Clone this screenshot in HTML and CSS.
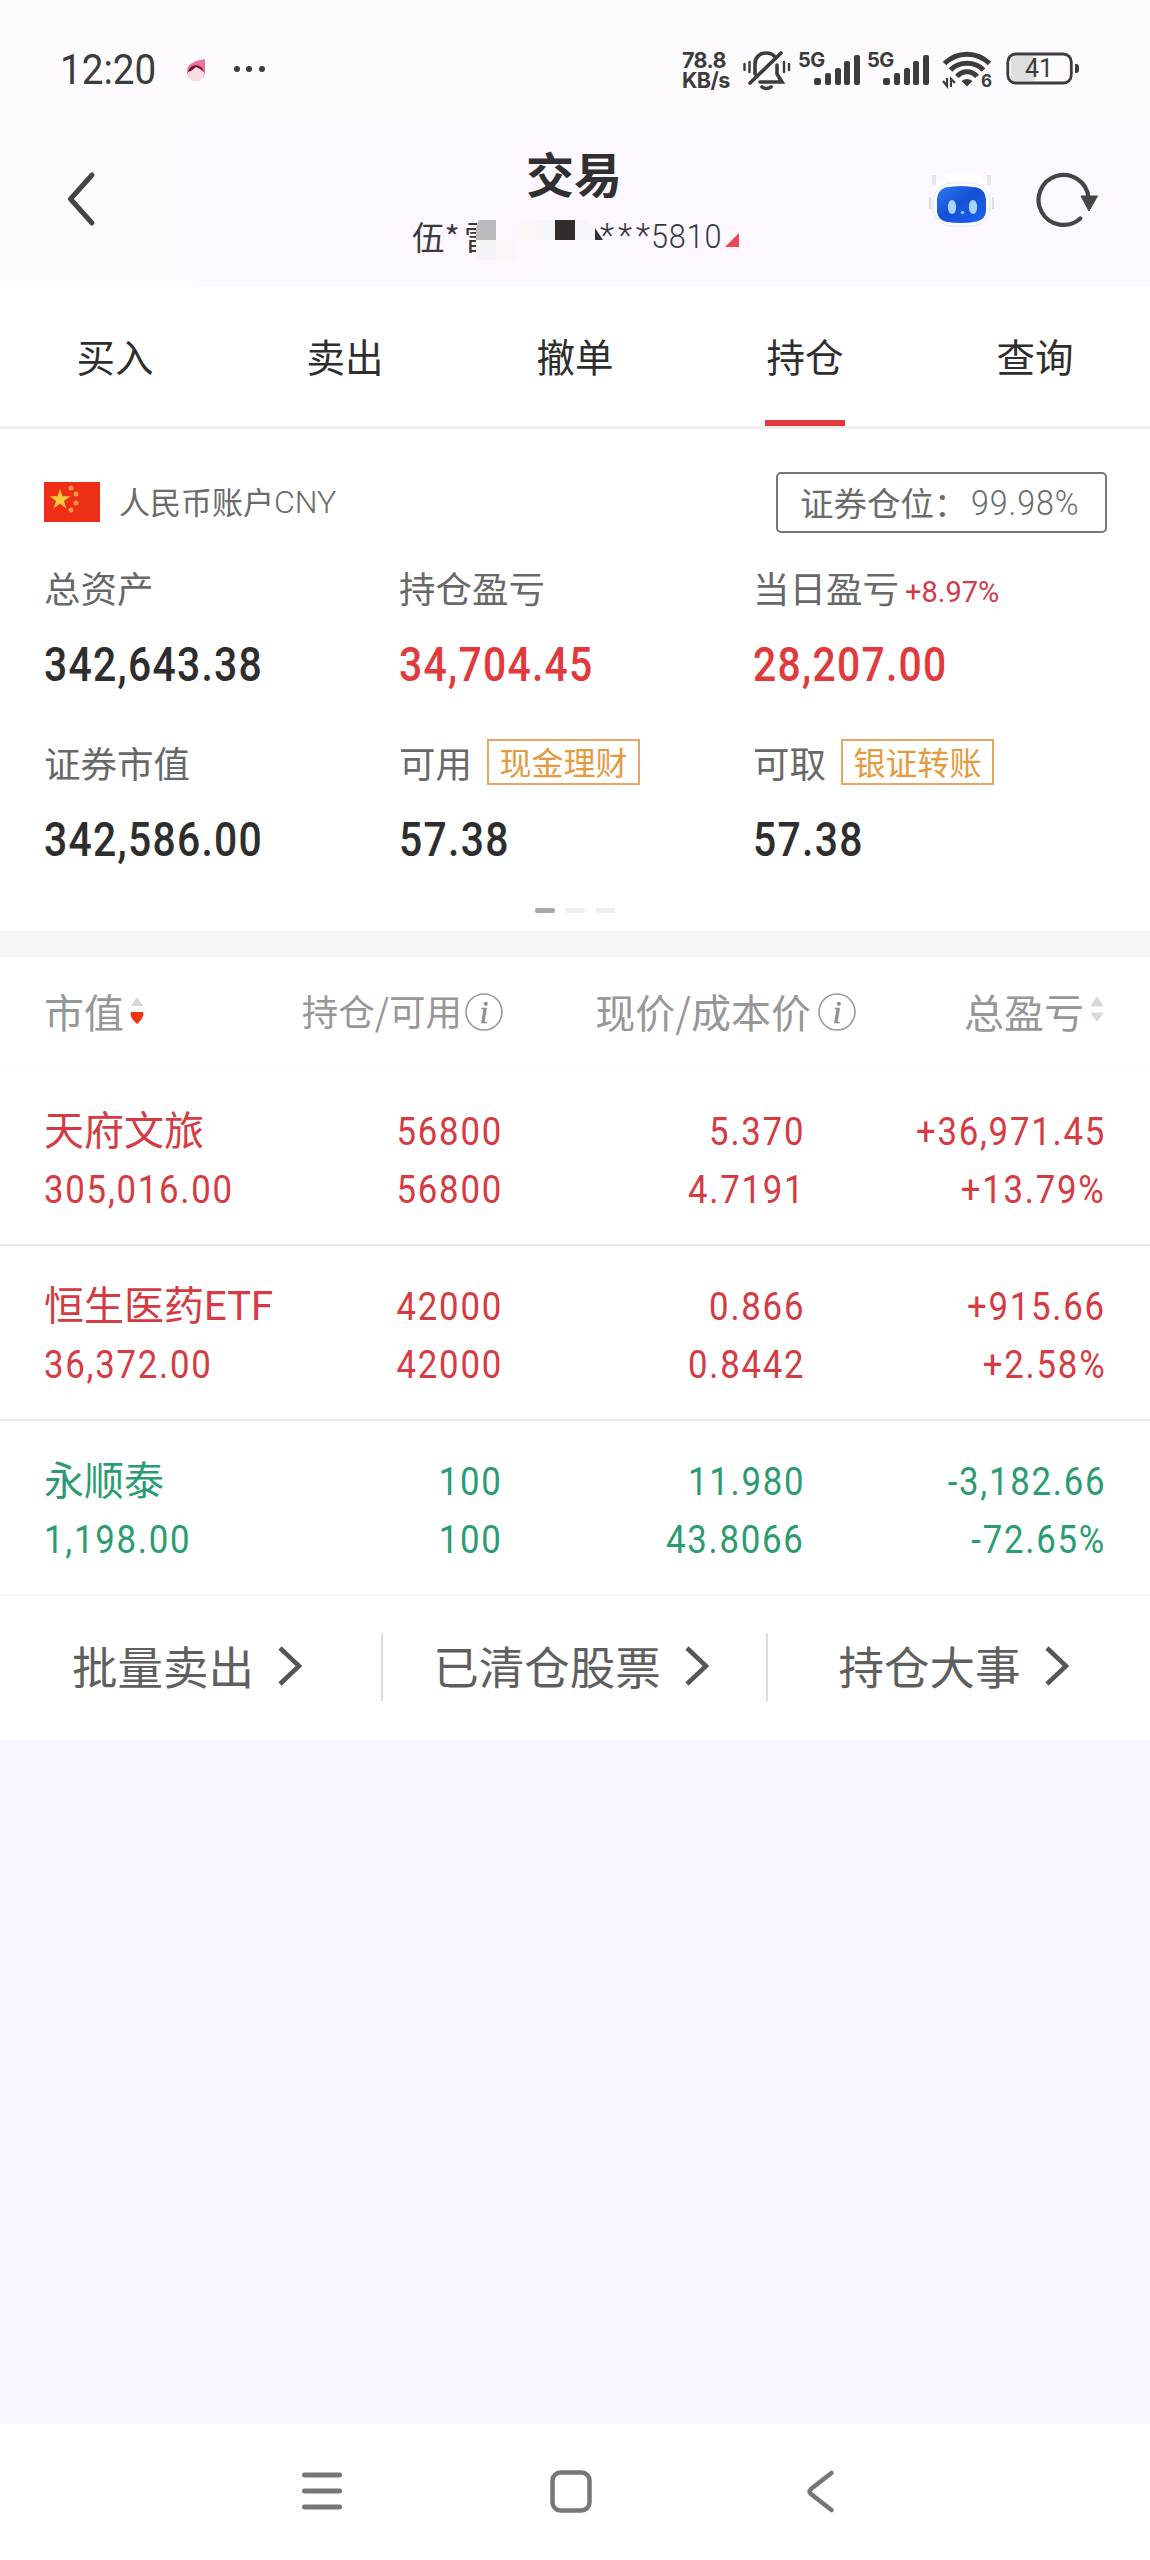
FILE: index.html
```html
<!DOCTYPE html>
<html lang="zh-CN">
<head>
<meta charset="utf-8">
<title>交易</title>
<link rel="stylesheet" href="styles.css">
</head>
<body>
<div class="top">
  <div class="status">
    <span class="time num">12:20</span>
    <svg class="flame" width="20" height="24" viewBox="0 0 20 24"><path d="M19 1v13a9 9 0 0 1-18 0C1 5 9 3 19 1z" fill="#e9749b"/><ellipse cx="10" cy="16" rx="8" ry="7" fill="#fbdde6"/><path d="M2 14C4 5 16 5 18 14L14 11 10 9 5 13z" fill="#7c1430"/></svg>
    <svg class="dots" width="30" height="8" viewBox="0 0 30 8" fill="#3c3c3c"><circle cx="3" cy="4" r="3"/><circle cx="15" cy="4" r="3"/><circle cx="28" cy="4" r="3"/></svg>
    <div class="speed"><span>78.8</span><span>KB/s</span></div>
    <svg class="bell" width="48" height="40" viewBox="0 0 48 40" fill="none" stroke="#3c3c3c" stroke-width="3.6" stroke-linecap="round"><path d="M12 24V14C12 7 17 3 23 3c4 0 7 1 9 4M34 15v9l5 8H17M7 33L38 3"/><path d="M19 37c3 2 6 2 9 0" stroke-width="3.6"/><path d="M1.5 14v6M6.500 12v10M41 12v10M46 14v6" stroke-width="2.4"/></svg>
    <svg class="signal" width="64" height="36" viewBox="0 0 64 36"><text x="0" y="15.500" class="g5">5G</text><g fill="#3c3c3c"><rect x="16" y="27" width="7" height="7" rx="2"/><rect x="27" y="22" width="6" height="12" rx="2"/><rect x="37" y="17" width="6" height="17" rx="2"/><rect x="46" y="10" width="6" height="24" rx="2"/><rect x="56" y="4" width="6" height="30" rx="2"/></g></svg>
    <svg class="signal" width="64" height="36" viewBox="0 0 64 36"><text x="0" y="15.500" class="g5">5G</text><g fill="#3c3c3c"><rect x="16" y="27" width="7" height="7" rx="2"/><rect x="27" y="22" width="6" height="12" rx="2"/><rect x="37" y="17" width="6" height="17" rx="2"/><rect x="46" y="10" width="6" height="24" rx="2"/><rect x="56" y="4" width="6" height="30" rx="2"/></g></svg>
    <svg class="wifi" width="50" height="40" viewBox="0 0 50 40"><g fill="none" stroke="#3c3c3c" stroke-width="5"><path d="M1.500 13.500C14 1 34 1 46.500 13.500"/><path d="M7.500 20C16 11 32 11 40.500 20"/><path d="M14 26.500C19 20 29 20 34 26.500"/></g><path d="M18.500 31Q24 27 29.500 31L24 36.500z" fill="#3c3c3c"/><path d="M0 31l4 5V28M8 37v-8l4 4" fill="none" stroke="#3c3c3c" stroke-width="2.200"/><text x="38" y="37" class="six">6</text></svg>
    <svg class="battery" width="74" height="34" viewBox="0 0 74 34"><rect x="5" y="4" width="24" height="25" rx="4" fill="#dedede"/><rect x="1.800" y="2" width="63.500" height="29" rx="8" fill="none" stroke="#3c3c3c" stroke-width="2.800"/><path d="M69 12h1a3 3 0 0 1 3 3v3a3 3 0 0 1-3 3h-1z" fill="#3c3c3c"/><text x="33" y="25" class="bat">41</text></svg>
  </div>
  <div class="header">
    <svg class="back" width="28" height="54" viewBox="0 0 28 54"><path d="M25 3L3.500 27 25 51" fill="none" stroke="#454545" stroke-width="5" stroke-linecap="round" stroke-linejoin="round"/></svg>
    <div class="heading">
      <h1>交易</h1>
      <div class="account-no">
        <span class="who">伍*</span><span class="clip">雷</span>
        <svg class="mosaic" width="128" height="40" viewBox="0 0 128 40"><path d="M3 0h17v20H0V8z" fill="#bcbabd"/><path d="M0 20h20v20H4L0 34z" fill="#f4f3f6"/><path d="M20 20h20v20H20z" fill="#fdf6f6"/><path d="M41 0h19v20H41z" fill="#fdf7f7"/><path d="M60 0h19v20H60z" fill="#f5f5f6"/><path d="M79 0h20v20H79z" fill="#322c2a"/><path d="M99 0h12l8 8v12H99z" fill="#f5f5f8"/><path d="M119 8l8 12h-8z" fill="#33313a"/></svg>
        <span class="stars">***</span><span class="tail">5810</span>
        <svg class="corner" width="14" height="14" viewBox="0 0 14 14"><path d="M14 0v14H0z" fill="#ef4655"/></svg>
      </div>
    </div>
    <svg class="robot" width="68" height="68" viewBox="0 0 68 68"><defs><linearGradient id="face" x1="0" x2="1" y2="1"><stop offset="0" stop-color="#2f7df2"/><stop offset=".45" stop-color="#1451d6"/><stop offset="1" stop-color="#1b63ee"/></linearGradient></defs><rect x="6" y="7" width="57" height="50" rx="20" fill="#fff"/><path d="M7 8v10M62 8v10" stroke="#e6e7ee" stroke-width="4"/><path d="M3 30v12M66 30v12" stroke="#dedee6" stroke-width="2"/><rect x="6" y="16" width="57" height="43" rx="19" fill="#fff" stroke="#dfe5f7"/><path d="M18 20.500q16-3 32 0 8 2 9 12v12q-1 8-9 10-16 3-32 0-7-2-8-10V32q1-9 8-11.500z" fill="url(#face)"/><ellipse cx="25" cy="40" rx="4.200" ry="7" fill="#a7d4ff"/><ellipse cx="46" cy="40" rx="4.200" ry="7" fill="#a7d4ff"/><circle cx="35.500" cy="45.500" r="1.800" fill="#8dbcf9"/></svg>
    <svg class="refresh" width="62" height="56" viewBox="0 0 62 56"><path d="M43.300 47.500A25 25 0 1 1 51.500 27" fill="none" stroke="#454545" stroke-width="4.200" stroke-linecap="round"/><path d="M44 25h16.500L52 40z" fill="#454545" stroke="#454545" stroke-linejoin="round"/></svg>
  </div>
</div>

<nav class="tabs"><span>买入</span><span>卖出</span><span>撤单</span><span class="on">持仓</span><span>查询</span></nav>

<section class="summary">
  <div class="acct">
    <svg class="flag" width="56" height="40" viewBox="0 0 56 40"><path d="M0 0h56v40H0z" fill="#ee2f17"/><path d="M16 7l2.500 7.300h7.600l-6.100 4.600 2.300 7.400-6.300-4.500-6.300 4.500 2.300-7.400-6.100-4.600h7.600z" fill="#fdc93b"/><g fill="#f5953c"><circle cx="27" cy="6" r="2.500"/><circle cx="32" cy="12" r="2.500"/><circle cx="32" cy="21" r="2.500"/><circle cx="27" cy="28" r="2.500"/></g></svg>
    <span class="acct-name">人民币账户</span><span class="cny">CNY</span>
    <span class="position"><span>证券仓位：</span><span class="pct">99.98%</span></span>
  </div>
  <div class="stats">
    <div class="stat"><div class="label">总资产</div><div class="value num">342,643.38</div></div>
    <div class="stat"><div class="label">持仓盈亏</div><div class="value num red">34,704.45</div></div>
    <div class="stat"><div class="label">当日盈亏<span class="delta">+8.97%</span></div><div class="value num red">28,207.00</div></div>
    <div class="stat"><div class="label">证券市值</div><div class="value num">342,586.00</div></div>
    <div class="stat"><div class="label">可用<span class="tag">现金理财</span></div><div class="value num">57.38</div></div>
    <div class="stat"><div class="label">可取<span class="tag">银证转账</span></div><div class="value num">57.38</div></div>
  </div>
  <div class="pager"><i class="cur"></i><i></i><i></i></div>
</section>

<section class="holdings">
  <div class="row thead">
    <div class="c1"><span>市值</span><svg class="sort" width="14" height="30" viewBox="0 0 14 30"><path d="M7 0l6 9H1z" fill="#d6d4d6"/><path d="M1 15h12q2 5-6 12-8-7-6-12z" fill="#f0330f"/></svg></div>
    <div class="c2"><span>持仓/可用</span><svg class="info" width="38" height="38" viewBox="0 0 38 38"><circle cx="19" cy="19" r="18" fill="none" stroke="#9b9b9b" stroke-width="1.600"/><text x="19" y="30" class="i">i</text></svg></div>
    <div class="c3"><span>现价/成本价</span><svg class="info" width="38" height="38" viewBox="0 0 38 38"><circle cx="19" cy="19" r="18" fill="none" stroke="#9b9b9b" stroke-width="1.600"/><text x="19" y="30" class="i">i</text></svg></div>
    <div class="c4"><span>总盈亏</span><svg class="sort" width="14" height="30" viewBox="0 0 14 30"><path d="M7 0l6 9H1zM1 16h12l-6 8z" fill="#d9d7d9" stroke="#d9d7d9" stroke-linejoin="round"/></svg></div>
  </div>
  <div class="row up">
    <div class="c1"><b>天府文旅</b><span class="num">305,016.00</span></div>
    <div class="c2"><span class="num">56800</span><span class="num">56800</span></div>
    <div class="c3"><span class="num">5.370</span><span class="num">4.7191</span></div>
    <div class="c4"><span class="num">+36,971.45</span><span class="num">+13.79%</span></div>
  </div>
  <div class="row up">
    <div class="c1"><b>恒生医药<span class="lat">ETF</span></b><span class="num">36,372.00</span></div>
    <div class="c2"><span class="num">42000</span><span class="num">42000</span></div>
    <div class="c3"><span class="num">0.866</span><span class="num">0.8442</span></div>
    <div class="c4"><span class="num">+915.66</span><span class="num">+2.58%</span></div>
  </div>
  <div class="row down">
    <div class="c1"><b>永顺泰</b><span class="num">1,198.00</span></div>
    <div class="c2"><span class="num">100</span><span class="num">100</span></div>
    <div class="c3"><span class="num">11.980</span><span class="num">43.8066</span></div>
    <div class="c4"><span class="num">-3,182.66</span><span class="num">-72.65%</span></div>
  </div>
  <div class="links">
    <div class="link"><span>批量卖出</span><svg width="26" height="42" viewBox="0 0 26 42"><path d="M3 3l19 18L3 39" fill="none" stroke="#555" stroke-width="4.500"/></svg></div>
    <div class="link"><span>已清仓股票</span><svg width="26" height="42" viewBox="0 0 26 42"><path d="M3 3l19 18L3 39" fill="none" stroke="#555" stroke-width="4.500"/></svg></div>
    <div class="link"><span>持仓大事</span><svg width="26" height="42" viewBox="0 0 26 42"><path d="M3 3l19 18L3 39" fill="none" stroke="#555" stroke-width="4.500"/></svg></div>
  </div>
</section>

<footer class="sysnav">
  <svg width="40" height="44" viewBox="0 0 40 44"><path d="M2.500 5h35M2.500 21h35M2.500 37h35" stroke="#777" stroke-width="5" stroke-linecap="round"/></svg>
  <svg width="42" height="44" viewBox="0 0 42 44"><rect x="2.500" y="2.500" width="37" height="38" rx="8" fill="none" stroke="#777" stroke-width="4.500"/></svg>
  <svg width="28" height="44" viewBox="0 0 28 44"><path d="M24.500 3L4 19Q1.500 21.500 4 24L24.500 40" fill="none" stroke="#777" stroke-width="4.500" stroke-linecap="round"/></svg>
</footer>
</body>
</html>
```
FILE: styles.css
```css
* { box-sizing: border-box; }
body {
  margin: 0;
  width: 1150px;
  height: 2560px;
  display: flex;
  flex-direction: column;
  background: #f7f7ff;
  color: #2e2e2e;
  font-family: "Noto Sans CJK SC", sans-serif;
}
svg { display: block; flex: none; overflow: visible; }
.num, .cny, .pct, .delta, .tail, .stars, .lat { font-family: Roboto, "Noto Sans CJK SC", sans-serif; }

/* status bar and title */
.top { height: 287px; background: #fefbff; }
.status { height: 127px; display: flex; align-items: flex-start; padding: 50px 72px 0 60px; }
.time { width: 124px; font-size: 42px; line-height: 40px; color: #3c3c3c; transform: scaleX(.92); transform-origin: left; }
.flame { margin: 8px 0 0 2px; }
.dots { margin: 15px 0 0 28px; }
.speed {
  margin-left: auto; width: 61px; display: flex; flex-direction: column;
  font: 700 21.500px/20px Inter, sans-serif; letter-spacing: -.6px; color: #3c3c3c;
}
.bell { margin-right: 7px; }
.signal { margin: 1px 5px 0 0; }
.g5 { font: 700 20px Inter, sans-serif; letter-spacing: -.5px; fill: #3c3c3c; }
.wifi { margin-left: 7px; }
.six { font: 700 17px Inter, sans-serif; fill: #3c3c3c; text-anchor: start; }
.battery { margin: 2px -2px 0 13px; }
.bat { font: 400 25px Roboto, sans-serif; fill: #3c3c3c; text-anchor: middle; }

.header {
  height: 160px; display: flex; align-items: flex-start;
  padding: 45px 50px 0 67px;
  background: linear-gradient(90deg, #fefbff 192px, #fdf8ff 202px);
}
.heading { flex: none; margin-left: 317px; width: 370px; }
h1 { margin: -30px 0 0 114px; font-size: 48px; line-height: 60px; font-weight: 700; color: #303030; }
.account-no { position: relative; display: flex; height: 50px; margin-top: 9px; align-items: center; line-height: 50px; color: #3a3a3a; }
.who { width: 52px; font-size: 32.500px; white-space: nowrap; }
.clip { width: 13px; overflow: hidden; font-size: 32.500px; }
.mosaic { position: absolute; left: 64px; top: 9px; }
.stars { width: 51px; margin-left: 123px; font-size: 33px; letter-spacing: 4px; white-space: nowrap; font-weight: 300; }
.tail { width: 74px; font-size: 34px; font-weight: 300; letter-spacing: 1px; transform: scaleX(.9); transform-origin: left; }
.corner { margin-top: 8px; }
.robot { margin: -5px 0 0 145px; }
.refresh { margin: -1px 0 0 42px; }

/* tabs */
.tabs { height: 142px; display: grid; grid-template-columns: repeat(5, 1fr); background: #fff; border-bottom: 3px solid #f0edf0; }
.tabs span { position: relative; text-align: center; font-size: 38.500px; line-height: 136px; font-weight: 400; }
.tabs .on::after { content: ""; position: absolute; left: 75px; bottom: 0; width: 80px; height: 6px; background: #e4383c; }

/* account summary */
.summary { height: 502px; background: #fff; padding: 43px 43px 0 44px; display: flex; flex-direction: column; }
.acct { height: 60px; display: flex; align-items: center; color: #6b6b6b; }
.acct-name { margin: -3px 0 0 19px; font-size: 31px; font-weight: 400; }
.cny { font-size: 32px; font-weight: 300; }
.position {
  margin-left: auto; width: 331px; height: 61px; display: flex; align-items: center;
  padding-left: 22px; border: 2px solid #777; border-radius: 5px; font-size: 33.500px; font-weight: 400; line-height: 54px; white-space: nowrap;
}
.position .pct { margin: 3px 0 0 3px; font-size: 35px; font-weight: 300; letter-spacing: 1px; transform: scaleX(.92); transform-origin: left; }
.stats { display: grid; grid-template-columns: 355px 354px 1fr; grid-auto-rows: 175px; margin-top: 25px; }
.label { height: 60px; display: flex; align-items: center; font-size: 36.500px; color: #686868; font-weight: 400; white-space: nowrap; }
.delta { margin: 10px 0 0 6px; font-size: 29px; color: #d23a4c; }
.tag { margin-left: 15px; width: 153px; height: 46px; border: 2px solid #e6a668; font-size: 32px; line-height: 40px; color: #e59a3e; text-align: center; }
.value { display: inline-block; margin-top: 20px; height: 56px; line-height: 56px; font-size: 47.500px; font-weight: 500; letter-spacing: 1.500px; transform: scaleX(.86); transform-origin: left; }
.red { color: #e03a3d; }
.pager { display: flex; gap: 10px; margin: -5px 0 0 491px; padding-top: 6px; }
.pager i { width: 20px; height: 5px; border-radius: 2px; background: #f0eef0; }
.pager .cur { background: #aaa8aa; }

/* holdings table */
.holdings { height: 809px; border-top: 26px solid #f6f6f6; background: #fff; }
.row { height: 175px; display: grid; grid-template-columns: 257px 200px 302px 301px; padding: 28px 0 0 44px; border-bottom: 2px solid #ebe9eb; }
.row > div { display: flex; flex-direction: column; line-height: 58px; white-space: nowrap; }
.row .num { font-size: 39.500px; height: 58px; line-height: 65px; font-weight: 400; letter-spacing: 2px; margin-right: -2px; transform: scaleX(.88); transform-origin: right; }
.c2, .c3, .c4 { align-items: flex-end; }
.row .c1 { align-items: flex-start; }
.row .c1 .num { transform-origin: left; }
.row b { font-size: 40px; font-weight: 400; height: 58px; }
.up { color: #d63a42; }
.down { color: #2b9c72; border-color: #fbf7fa; }
.row.thead { height: 114px; padding-top: 25px; border-color: #fcf9fc; color: #979797; font-size: 40px; }
.row.thead > div { flex-direction: row; align-items: center; height: 58px; }
.row.thead .c2 { font-size: 36.500px; justify-content: flex-end; margin-right: -2px; }
.row.thead .c3 { justify-content: flex-end; margin-right: -53px; }
.row.thead .c4 { justify-content: flex-end; }
.row.thead .c3 .info { margin-left: 7px; }
.row.thead .c2 .info { margin-left: 3px; }
.thead .info { margin-top: 2px; }
.sort { margin: 2px 0 0 6px; }
.i { font: italic 400 31px "Liberation Serif", serif; fill: #8d8d8d; stroke: #8d8d8d; stroke-width: .6; text-anchor: middle; }

/* shortcuts */
.links { height: 142px; display: grid; grid-template-columns: 381px 385px 384px; align-items: center; }
.link { display: flex; align-items: center; justify-content: center; gap: 23px; height: 68px; padding-right: 6px; font-size: 45.500px; line-height: 62px; color: #5f5f5f; white-space: nowrap; }
.link span { margin-top: -4px; }
.link svg { margin-top: -2px; }
.link + .link { border-left: 2px solid #dcdcdc; }
.link:last-child { padding-right: 10px; }

/* system navigation */
.sysnav { margin-top: auto; height: 136px; display: grid; grid-template-columns: 248px 257px 28px; background: #fff; padding: 46px 0 0 302px; }
```
